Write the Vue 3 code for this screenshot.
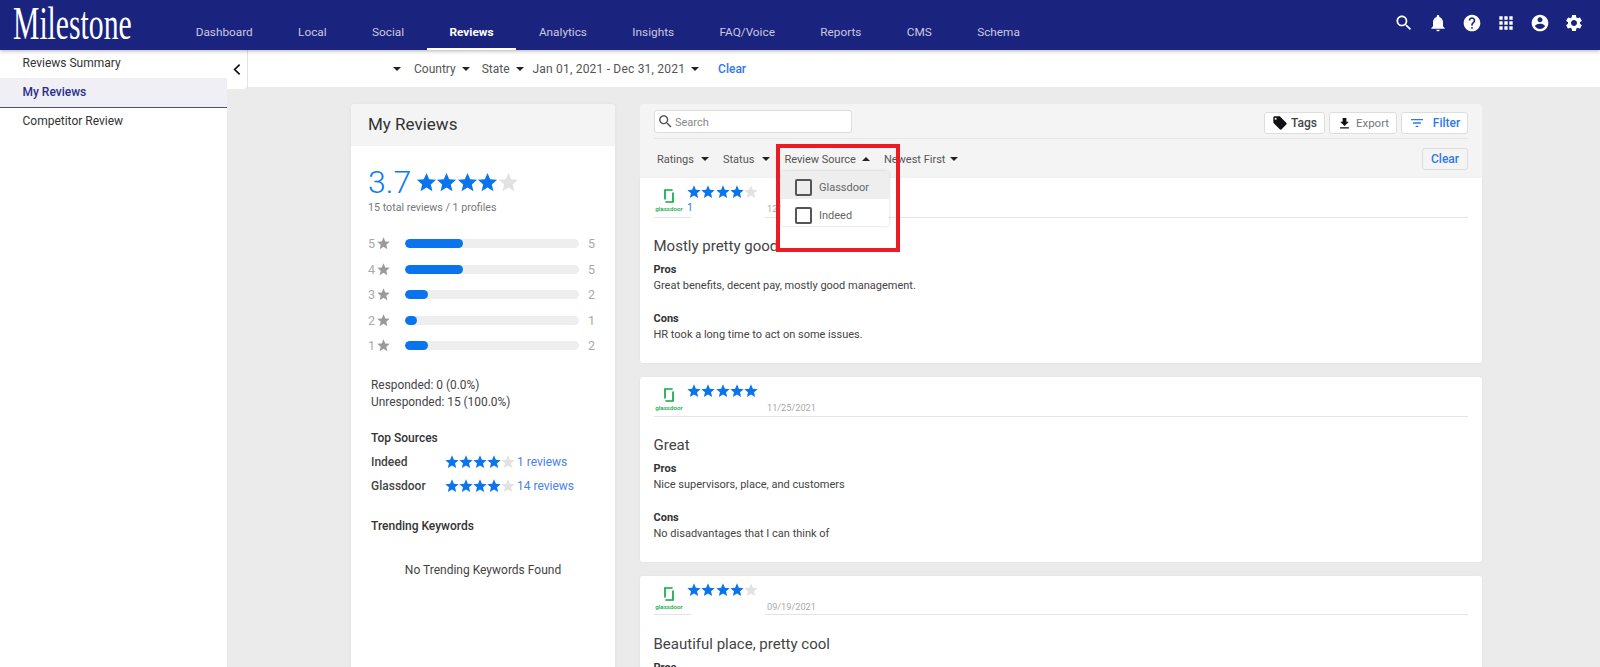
<script setup>
const star = 'M12 17.27L18.18 21l-1.64-7.03L22 9.24l-7.19-.61L12 2 9.19 8.63 2 9.24l5.46 4.73L5.82 21z'
const navItems = ['Dashboard', 'Local', 'Social', 'Reviews', 'Analytics', 'Insights', 'FAQ/Voice', 'Reports', 'CMS', 'Schema']
const headIcons = [
  'M15.5 14h-.79l-.28-.27C15.41 12.59 16 11.11 16 9.5 16 5.91 13.09 3 9.5 3S3 5.91 3 9.5 5.91 16 9.5 16c1.61 0 3.09-.59 4.23-1.57l.27.28v.79l5 4.99L20.49 19l-4.99-5zm-6 0C7.01 14 5 11.99 5 9.5S7.01 5 9.5 5 14 7.01 14 9.5 11.99 14 9.5 14z',
  'M12 22c1.1 0 2-.9 2-2h-4c0 1.1.89 2 2 2zm6-6v-5c0-3.07-1.64-5.64-4.5-6.32V4c0-.83-.67-1.5-1.5-1.5s-1.5.67-1.5 1.5v.68C7.63 5.36 6 7.92 6 11v5l-2 2v1h16v-1l-2-2z',
  'M12 2C6.48 2 2 6.48 2 12s4.48 10 10 10 10-4.48 10-10S17.52 2 12 2zm1 17h-2v-2h2v2zm2.07-7.75l-.9.92C13.45 12.9 13 13.5 13 15h-2v-.5c0-1.1.45-2.1 1.17-2.83l1.24-1.26c.37-.36.59-.86.59-1.41 0-1.1-.9-2-2-2s-2 .9-2 2H8c0-2.21 1.79-4 4-4s4 1.79 4 4c0 .88-.36 1.68-.93 2.25z',
  'M4 8h4V4H4v4zm6 12h4v-4h-4v4zm-6 0h4v-4H4v4zm0-6h4v-4H4v4zm6 0h4v-4h-4v4zm6-10v4h4V4h-4zm-6 4h4V4h-4v4zm6 6h4v-4h-4v4zm0 6h4v-4h-4v4z',
  'M12 2C6.48 2 2 6.48 2 12s4.48 10 10 10 10-4.48 10-10S17.52 2 12 2zm0 3c1.66 0 3 1.34 3 3s-1.34 3-3 3-3-1.34-3-3 1.34-3 3-3zm0 14.2c-2.5 0-4.71-1.28-6-3.22.03-1.99 4-3.08 6-3.08 1.99 0 5.97 1.09 6 3.08-1.29 1.94-3.5 3.22-6 3.22z',
  'M19.14 12.94c.04-.3.06-.61.06-.94 0-.32-.02-.64-.07-.94l2.03-1.58c.18-.14.23-.41.12-.61l-1.92-3.32c-.12-.22-.37-.29-.59-.22l-2.39.96c-.5-.38-1.03-.7-1.62-.94l-.36-2.54c-.04-.24-.24-.41-.48-.41h-3.84c-.24 0-.43.17-.47.41l-.36 2.54c-.59.24-1.13.57-1.62.94l-2.39-.96c-.22-.08-.47 0-.59.22L2.74 8.87c-.12.21-.08.47.12.61l2.03 1.58c-.05.3-.09.63-.09.94s.02.64.07.94l-2.03 1.58c-.18.14-.23.41-.12.61l1.92 3.32c.12.22.37.29.59.22l2.39-.96c.5.38 1.03.7 1.62.94l.36 2.54c.05.24.24.41.48.41h3.84c.24 0 .44-.17.47-.41l.36-2.54c.59-.24 1.13-.56 1.62-.94l2.39.96c.22.08.47 0 .59-.22l1.92-3.32c.12-.22.07-.47-.12-.61l-2.01-1.58zM12 15.6c-1.98 0-3.6-1.62-3.6-3.6s1.62-3.6 3.6-3.6 3.6 1.62 3.6 3.6-1.62 3.6-3.6 3.6z'
]
const sideItems = ['Reviews Summary', 'My Reviews', 'Competitor Review']
const ratings = [
  { n: 5, count: 5, w: 58 },
  { n: 4, count: 5, w: 58 },
  { n: 3, count: 2, w: 23 },
  { n: 2, count: 1, w: 12 },
  { n: 1, count: 2, w: 23 }
]
const sources = [
  { name: 'Indeed', text: '1 reviews' },
  { name: 'Glassdoor', text: '14 reviews' }
]
const reviews = [
  { stars: 4, sub: '1', date: '12/02/2021', gap: true, title: 'Mostly pretty good', pros: 'Great benefits, decent pay, mostly good management.', cons: 'HR took a long time to act on some issues.' },
  { stars: 5, sub: '', date: '11/25/2021', gap: false, title: 'Great', pros: 'Nice supervisors, place, and customers', cons: 'No disadvantages that I can think of' },
  { stars: 4, sub: '', date: '09/19/2021', gap: true, title: 'Beautiful place, pretty cool', pros: '', cons: '' }
]
</script>

<template>
  <div class="page">
    <header class="topbar">
      <div class="logo"><span>Milestone</span></div>
      <nav class="nav">
        <a v-for="item in navItems" :key="item" class="tab" :class="{ active: item === 'Reviews' }">{{ item }}</a>
      </nav>
      <div class="head-icons">
        <svg v-for="(d, i) in headIcons" :key="i" viewBox="0 0 24 24" class="head-icon"><path :d="d" /></svg>
      </div>
    </header>

    <div class="body">
      <aside class="sidebar">
        <a v-for="item in sideItems" :key="item" class="side-item" :class="{ current: item === 'My Reviews' }">{{ item }}</a>
      </aside>

      <main class="main">
        <div class="top-row">
          <button class="toggle">
            <svg viewBox="0 0 24 24" class="chev"><path d="M15 5l-7 7 7 7" /></svg>
          </button>
          <div class="filterbar">
            <i class="caret first"></i>
            <span>Country</span><i class="caret"></i>
            <span>State</span><i class="caret state-caret"></i>
            <span class="date">Jan 01, 2021 - Dec 31, 2021</span><i class="caret"></i>
            <a class="clear-link">Clear</a>
          </div>
        </div>

        <div class="columns">
          <section class="summary">
            <h2 class="summary-title">My Reviews</h2>
            <div class="score">
              <span class="score-num">3.7</span>
              <span class="stars big">
                <svg v-for="s in 5" :key="s" viewBox="0 0 24 24" :class="{ off: s > 4 }"><path :d="star" /></svg>
              </span>
            </div>
            <p class="total">15 total reviews / 1 profiles</p>
            <div class="bars">
              <div v-for="r in ratings" :key="r.n" class="bar-row">
                <span class="bar-n">{{ r.n }}</span>
                <svg viewBox="0 0 24 24" class="bar-star"><path :d="star" /></svg>
                <div class="track"><div class="fill" :style="{ width: r.w + 'px' }"></div></div>
                <span class="bar-count">{{ r.count }}</span>
              </div>
            </div>
            <div class="stats">
              <p>Responded: 0 (0.0%)</p>
              <p>Unresponded: 15 (100.0%)</p>
            </div>
            <h3 class="sub-head top-sources">Top Sources</h3>
            <div v-for="s in sources" :key="s.name" class="source-row">
              <span class="source-name">{{ s.name }}</span>
              <span class="stars small">
                <svg v-for="n in 5" :key="n" viewBox="0 0 24 24" :class="{ off: n > 4 }"><path :d="star" /></svg>
              </span>
              <a class="source-link">{{ s.text }}</a>
            </div>
            <h3 class="sub-head trending">Trending Keywords</h3>
            <p class="none">No Trending Keywords Found</p>
          </section>

          <section class="list">
            <div class="toolbar">
              <div class="tool-top">
                <div class="search">
                  <svg viewBox="0 0 24 24" class="search-icon"><path d="M15.5 14h-.79l-.28-.27C15.41 12.59 16 11.11 16 9.5 16 5.91 13.09 3 9.5 3S3 5.91 3 9.5 5.91 16 9.5 16c1.61 0 3.09-.59 4.23-1.57l.27.28v.79l5 4.99L20.49 19l-4.99-5zm-6 0C7.01 14 5 11.99 5 9.5S7.01 5 9.5 5 14 7.01 14 9.5 11.99 14 9.5 14z" /></svg>
                  <span class="search-text">Search</span>
                </div>
                <div class="actions">
                  <button class="btn tags">
                    <svg viewBox="0 0 24 24"><path d="M21.41 11.58l-9-9C12.05 2.22 11.55 2 11 2H4c-1.1 0-2 .9-2 2v7c0 .55.22 1.05.59 1.42l9 9c.36.36.86.58 1.41.58.55 0 1.05-.22 1.41-.59l7-7c.37-.36.59-.86.59-1.41 0-.55-.23-1.06-.59-1.42zM5.5 7C4.67 7 4 6.33 4 5.5S4.67 4 5.5 4 7 4.67 7 5.5 6.33 7 5.5 7z" /></svg>
                    Tags
                  </button>
                  <button class="btn export">
                    <svg viewBox="0 0 24 24"><path d="M19 9h-4V3H9v6H5l7 7 7-7zM5 18v2h14v-2H5z" /></svg>
                    Export
                  </button>
                  <button class="btn filter">
                    <svg viewBox="0 0 24 24"><path d="M10 18h4v-2h-4v2zM3 6v2h18V6H3zm3 7h12v-2H6v2z" /></svg>
                    Filter
                  </button>
                </div>
              </div>
              <div class="tool-bottom">
                <span class="f">Ratings</span><i class="caret c1"></i>
                <span class="f">Status</span><i class="caret c2"></i>
                <span class="f">Review Source</span><i class="caret up c3"></i>
                <span class="f">Newest First</span><i class="caret c4"></i>
                <button class="btn clear">Clear</button>
              </div>
            </div>

            <article v-for="(r, i) in reviews" :key="i" class="review">
              <div class="review-head">
                <div class="brand">
                  <svg viewBox="0 0 10 14" class="gd"><path d="M8.6 1H1V10.6M1.4 13H9V3.4" fill="none" stroke="#0caa41" stroke-width="1.7" /></svg>
                  <span class="gd-text">glassdoor</span>
                </div>
                <div class="head-mid">
                  <span class="stars small">
                    <svg v-for="n in 5" :key="n" viewBox="0 0 24 24" :class="{ off: n > r.stars }"><path :d="star" /></svg>
                  </span>
                  <span class="sub-num">{{ r.sub }}</span>
                </div>
                <span class="date-txt">{{ r.date }}</span>
                <div class="rule-wrap" :class="{ broken: r.gap }"></div>
              </div>
              <h4 class="r-title">{{ r.title }}</h4>
              <p class="r-label">Pros</p>
              <p v-if="r.pros" class="r-text">{{ r.pros }}</p>
              <template v-if="r.cons">
                <p class="r-label cons">Cons</p>
                <p class="r-text">{{ r.cons }}</p>
              </template>
            </article>

            <div class="dropdown">
              <label class="opt hover"><i class="box"></i>Glassdoor</label>
              <label class="opt"><i class="box"></i>Indeed</label>
            </div>
            <div class="redbox"></div>
          </section>
        </div>
      </main>
    </div>
  </div>
</template>

<style>
html, body { margin: 0; padding: 0; overflow: hidden; }
</style>

<style scoped>
* { box-sizing: border-box; }
p, h2, h3, h4 { margin: 0; font-weight: 400; }
.page { width: 1600px; height: 667px; overflow: hidden; background: #ebebeb; font-family: Roboto, "Liberation Sans", sans-serif; font-size: 12px; color: #333; display: flex; flex-direction: column; }

.topbar { height: 50px; flex: none; background: #1a237e; display: flex; position: relative; z-index: 3; box-shadow: 0 1px 4px rgba(0,0,0,.3); }
.logo { flex: none; margin-right: -24px; padding: 1px 0 0 13px; color: #fff; font-family: "Liberation Serif", serif; font-size: 46px; line-height: 46px; white-space: nowrap; }
.logo span { display: inline-block; transform: scaleX(.645); transform-origin: left center; }
.nav { display: flex; }
.tab { color: #c8cae0; font-size: 11.8px; padding: 25px 22.7px 0; height: 50px; line-height: 14px; }
.tab.active { color: #fff; font-weight: 700; border-bottom: 2px solid #fff; }
.head-icons { margin-left: auto; display: flex; gap: 14px; padding: 13px 16px 0 0; }
.head-icon { width: 20px; height: 20px; fill: #fff; }

.body { flex: 1; display: flex; min-height: 0; }
.sidebar { width: 227px; flex: none; background: #fff; display: flex; flex-direction: column; }
.side-item { height: 28px; padding-left: 22.5px; line-height: 27px; font-size: 12px; color: #333; }
.side-item.current { height: 30px; background: #f0eff6; border-bottom: 1px solid #4a4aa5; color: #2a2f86; font-weight: 500; line-height: 28px; }

.main { flex: 1; min-width: 0; }
.top-row { display: flex; align-items: flex-start; height: 39px; }
.toggle { width: 20px; height: 39px; margin: 0; padding: 0; border: 0; background: #fff; border-radius: 0 0 4px 0; display: flex; align-items: center; justify-content: center; box-shadow: 1px 0 1px rgba(0,0,0,.04); }
.chev { width: 17px; height: 17px; fill: none; stroke: #111; stroke-width: 2.4; }
.filterbar { flex: 1; height: 37px; margin-left: 1px; background: #fff; display: flex; align-items: center; padding-left: 145px; font-size: 12px; color: #555; }
.caret { display: inline-block; width: 0; height: 0; border-left: 4px solid transparent; border-right: 4px solid transparent; border-top: 4px solid #222; flex: none; }
.caret.up { border-top: 0; border-bottom: 4px solid #222; }
.filterbar .caret { margin: 0 12px 0 6px; }
.filterbar .caret.first { margin: 0 13px 0 0; }
.filterbar .caret.state-caret { margin: 0 9px 0 6px; }
.filterbar .date { letter-spacing: .2px; }
.filterbar .date + .caret { margin: 0 19px 0 6px; }
.clear-link { color: #2f78e8; font-weight: 500; }

.columns { display: flex; gap: 25px; padding: 15px 118px 0 124px; align-items: stretch; height: 578px; }
.summary { width: 264px; flex: none; background: #fff; border-radius: 4px 4px 0 0; box-shadow: 0 0 4px rgba(0,0,0,.05); height: 620px; }
.summary-title { height: 42px; background: #f4f4f4; padding-left: 17px; line-height: 41px; font-size: 17px; color: #333; border-radius: 4px 4px 0 0; }
.score { display: flex; align-items: center; padding: 18px 0 0 17px; height: 54px; }
.score-num { color: #0a7bf2; font-size: 32px; font-weight: 300; line-height: 36px; width: 47px; }
.stars { display: inline-flex; }
.stars svg { fill: #0a74ee; flex: none; display: block; }
.stars svg.off { fill: #e2e2e2; }
.stars.big svg { width: 23px; height: 23px; margin-right: -2.6px; }
.stars.small svg { width: 16px; height: 16px; margin-right: -1.7px; }
.total { padding: 0 0 0 17px; font-size: 10.7px; color: #777; line-height: 16px; }
.bars { padding: 15px 0 0 17px; }
.bar-row { display: flex; align-items: center; height: 25.5px; color: #aaa; font-size: 12.5px; }
.bar-n { width: 8px; }
.bar-star { width: 15px; height: 15px; fill: #9a9a9a; }
.track { width: 174px; height: 9px; background: #eee; border-radius: 5px; margin-left: 14px; overflow: hidden; }
.fill { height: 100%; background: #0a74ee; border-radius: 5px; }
.bar-count { margin-left: 9px; }
.stats { padding: 18px 0 0 20px; font-size: 11.9px; color: #444; line-height: 17.5px; }
.sub-head { font-size: 12px; font-weight: 500; color: #333; padding-left: 20px; line-height: 16px; }
.top-sources { padding-top: 18px; box-sizing: content-box; }
.source-row { display: flex; align-items: center; height: 24.5px; padding-left: 20px; font-size: 12px; }
.top-sources + .source-row { margin-top: 4px; }
.source-name { width: 73px; font-weight: 500; color: #444; }
.source-link { margin-left: 3px; color: #4a80f0; }
.source-row .stars.small svg { margin-right: -2px; }
.trending { padding-top: 19px; box-sizing: content-box; }
.none { text-align: center; padding-top: 29px; font-size: 12px; color: #444; }

.list { flex: 1; min-width: 0; position: relative; display: flex; flex-direction: column; gap: 14px; border-radius: 4px 4px 0 0; }
.toolbar { background: #f4f4f4; height: 74px; margin-bottom: -14px; padding: 0 14px; border-radius: 4px 4px 0 0; flex: none; }
.tool-top { height: 35px; padding-top: 6px; display: flex; justify-content: space-between; border-bottom: 1px solid #e6e6e6; }
.search { width: 198px; height: 23px; background: #fff; border: 1px solid #ddd; border-radius: 3px; display: flex; align-items: center; font-size: 11px; color: #888; padding-left: 2px; }
.search-icon { width: 17px; height: 17px; fill: #555; margin-right: 1px; }
.search-text { padding-top: 1px; }
.actions { display: flex; gap: 4px; padding-top: 2px; }
.btn { height: 22px; border: 1px solid #ddd; border-radius: 3px; background: #fff; font-family: inherit; font-size: 12px; display: flex; align-items: center; justify-content: center; padding: 0; color: #555; }
.btn svg { width: 14px; height: 14px; fill: #111; }
.tags { width: 61px; font-weight: 500; color: #444; gap: 3px; }
.tags svg { width: 16px; height: 16px; }
.export { width: 68px; gap: 4px; color: #777; font-size: 11.5px; }
.export svg { width: 15px; height: 15px; }
.filter { width: 67px; color: #2f78e8; font-weight: 500; gap: 8px; }
.filter svg { fill: #2f78e8; width: 16px; height: 16px; }
.clear { width: 46px; height: 22px; color: #2f78e8; font-weight: 500; background: #f4f4f4; margin-left: auto; }
.tool-bottom { display: flex; align-items: center; height: 39px; font-size: 11px; color: #555; padding-left: 3px; padding-top: 1px; }
.f { flex: none; white-space: nowrap; }
.c1 { margin: 0 14px 0 7px; }
.c2 { margin: 0 14px 0 8px; }
.c3 { margin: 0 14px 0 6px; }
.c4 { margin-left: 5px; }

.review { background: #fff; height: 185px; padding: 0 14px; flex: none; border-radius: 0 0 3px 3px; box-shadow: 0 0 3px rgba(0,0,0,.05); overflow: hidden; }
.review:nth-of-type(n+2) { border-radius: 3px; }
.review-head { position: relative; height: 40px; display: flex; border-bottom: 1px solid #e4e4e4; }
.review:last-of-type .review-head { height: 39px; }
.brand { width: 32px; padding: 11px 2px 0 0; display: flex; flex-direction: column; align-items: center; flex: none; }
.gd { width: 10px; height: 14px; }
.gd-text { font-size: 6.2px; line-height: 8px; font-weight: 500; color: #0caa41; margin-top: 2px; }
.head-mid { width: 81px; padding-top: 6px; display: flex; flex-direction: column; flex: none; }
.sub-num { font-size: 10.5px; color: #2f78e8; margin: 2px 0 0 1px; line-height: 12px; }
.date-txt { font-size: 9.2px; color: #aaa; padding-top: 24px; line-height: 14px; }
.rule-wrap.broken { position: absolute; left: 37px; width: 74px; bottom: -1px; height: 1px; background: #fff; }
.r-title { font-size: 15px; color: #444; padding-top: 18px; line-height: 20px; margin-left: -.5px; }
.review:last-of-type .r-title { padding-top: 19px; }
.r-label { font-size: 11px; font-weight: 700; color: #333; margin-top: 6px; line-height: 15px; margin-left: -.5px; }
.r-label.cons { margin-top: 17px; }
.r-text { font-size: 11px; color: #444; line-height: 16px; min-height: 16px; margin: 1px 0 0 -.5px; }

.dropdown { position: absolute; left: 141px; top: 67px; width: 108px; height: 55px; background: #fff; border-radius: 3px; box-shadow: 0 0 3px rgba(0,0,0,.18); overflow: hidden; z-index: 2; }
.opt { display: flex; align-items: center; height: 28px; padding: 5px 0 0 14px; font-size: 11px; color: #666; gap: 7px; }
.opt.hover { background: #eee; }
.opt + .opt { height: 27px; }
.box { width: 17px; height: 17px; border: 2px solid #555; border-radius: 2px; background: transparent; flex: none; }
.redbox { position: absolute; left: 136px; top: 40px; width: 124px; height: 108px; border: 4px solid #ed1c24; z-index: 3; pointer-events: none; }
</style>
